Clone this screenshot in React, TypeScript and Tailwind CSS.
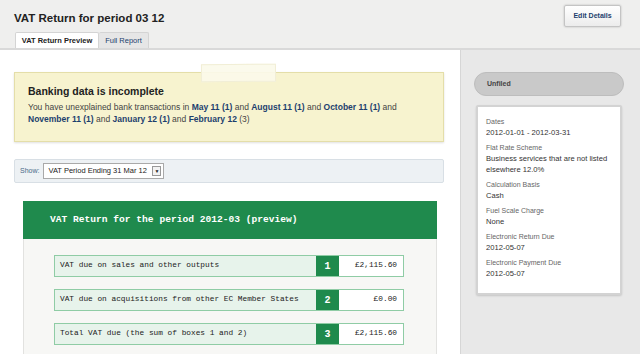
import React from "react";

const rows = [
  { label: "VAT due on sales and other outputs", box: "1", value: "£2,115.60" },
  { label: "VAT due on acquisitions from other EC Member States", box: "2", value: "£0.00" },
  { label: "Total VAT due (the sum of boxes 1 and 2)", box: "3", value: "£2,115.60" },
];

const details = [
  { label: "Dates", value: "2012-01-01 - 2012-03-31" },
  { label: "Flat Rate Scheme", value: "Business services that are not listed elsewhere 12.0%" },
  { label: "Calculation Basis", value: "Cash" },
  { label: "Fuel Scale Charge", value: "None" },
  { label: "Electronic Return Due", value: "2012-05-07" },
  { label: "Electronic Payment Due", value: "2012-05-07" },
];

function Link({ children }: { children: React.ReactNode }) {
  return <span className="font-bold text-[#1d3f6e]">{children}</span>;
}

export default function App() {
  return (
    <div className="w-[640px] h-[354px] overflow-hidden flex flex-col bg-white font-['Liberation_Sans',Arial,sans-serif] text-[#333]">
      {/* header */}
      <div className="h-[50px] shrink-0 bg-[#efefee] border-b-2 border-[#d9d9d9] flex flex-col">
        <div className="flex items-start justify-between pl-[14px] pr-[19px]">
          <h1 className="mt-[11px] text-[11.5px] font-bold text-[#222] leading-[14px]">
            VAT Return for period 03 12
          </h1>
          <button className="mt-[5px] h-[22px] w-[57px] rounded-[2px] border border-[#c4c4c4] bg-gradient-to-b from-white to-[#ececec] shadow-[0_0_2px_rgba(0,0,0,0.25)] text-[7px] font-bold text-[#1d3f6e]">
            Edit Details
          </button>
        </div>
        <div className="mt-auto flex pl-[15px] h-[16px]">
          <div className="w-[84px] bg-white border border-b-0 border-[#d4d4d4] rounded-t-[2px] flex items-center justify-center text-[7.5px] font-bold text-[#222]">
            VAT Return Preview
          </div>
          <div className="w-[50px] bg-[#e6e6e6] border border-b-0 border-l-0 border-[#d4d4d4] rounded-t-[2px] flex items-center justify-center text-[7.5px] text-[#1d3f6e]">
            Full Report
          </div>
        </div>
      </div>

      <div className="flex flex-1">
        {/* main */}
        <div className="w-[460px] shrink-0 pl-[14px] pr-[16px] pt-[22px]">
          <div className="relative h-[70px] bg-[#f7f3cf] border border-[#e4dea9] shadow-[0_1px_2px_rgba(0,0,0,0.12)] pl-[13px] pr-[30px] pt-[12px]">
            <div className="absolute left-[186px] -top-[9px] w-[75px] h-[18px] bg-[#fbf9ea]/90 border border-[#f1eed6] rotate-[-0.5deg]" />
            <div className="text-[10.5px] font-bold text-[#222] leading-[13px]">Banking data is incomplete</div>
            <p className="mt-[3px] text-[8.5px] leading-[12px] text-[#444]">
              You have unexplained bank transactions in <Link>May 11 (1)</Link> and{" "}
              <Link>August 11 (1)</Link> and <Link>October 11 (1)</Link> and{" "}
              <Link>November 11 (1)</Link> and <Link>January 12 (1)</Link> and{" "}
              <Link>February 12</Link> (3)
            </p>
          </div>

          <div className="mt-[17px] h-[24px] bg-[#edf1f4] border border-[#d8dfe5] rounded-[2px] flex items-center pl-[5px] gap-[4px]">
            <span className="text-[7px] text-[#4a6a88]">Show:</span>
            <div className="h-[16px] w-[121px] bg-white border border-[#a9a9a9] flex items-center justify-between pl-[4px] pr-[2px] text-[7.5px] text-[#222]">
              <span>VAT Period Ending 31 Mar 12</span>
              <span className="w-[9px] h-[10px] border border-[#999] bg-[#f2f2f2] flex items-center justify-center text-[5px] leading-none">▼</span>
            </div>
          </div>

          <div className="mt-[18px] mx-[9px] w-[414px] font-['Liberation_Mono','Courier_New',monospace]">
            <div className="h-[38px] bg-[#1f8a4d] flex items-center pl-[27px] text-[9.6px] font-bold text-white">
              VAT Return for the period 2012-03 (preview)
            </div>
            <div className="bg-[#f7f7f5] border border-t-0 border-[#e2e2e0] pl-[30px] pr-[32px] pt-[16px] pb-[20px] flex flex-col gap-[12px]">
              {rows.map((r) => (
                <div key={r.box} className="h-[22px] flex border border-[#8fcca5]">
                  <div className="flex-1 bg-[#e7f3eb] flex items-center pl-[5px] text-[7.8px] text-[#222]">
                    {r.label}
                  </div>
                  <div className="w-[23px] bg-[#1f8a4d] flex items-center justify-center text-[10px] font-bold text-white">
                    {r.box}
                  </div>
                  <div className="w-[64px] bg-white flex items-center justify-end pr-[6px] text-[7.8px] text-[#222]">
                    {r.value}
                  </div>
                </div>
              ))}
            </div>
          </div>
        </div>

        {/* sidebar */}
        <div className="flex-1 bg-[#e8e8e8] border-l border-[#d6d6d6] pl-[13px] pr-[16px] pt-[22px]">
          <div className="h-[24px] w-[150px] rounded-full bg-[#c9c9c9] border border-[#bdbdbd] flex items-center pl-[12px] text-[7px] font-bold text-[#444]">
            Unfiled
          </div>
          <div className="mt-[9px] ml-[2px] w-[146px] bg-white border-2 border-[#d3d3d3] rounded-[2px] shadow-[0_1px_2px_rgba(0,0,0,0.15)] pl-[8px] pr-[8px] pt-[9px] pb-[14px] flex flex-col gap-[4px]">
            {details.map((d) => (
              <div key={d.label} className="flex flex-col">
                <span className="text-[7px] leading-[11px] text-[#666]">{d.label}</span>
                <span className="text-[7.6px] leading-[11px] text-[#333]">{d.value}</span>
              </div>
            ))}
          </div>
        </div>
      </div>
    </div>
  );
}
